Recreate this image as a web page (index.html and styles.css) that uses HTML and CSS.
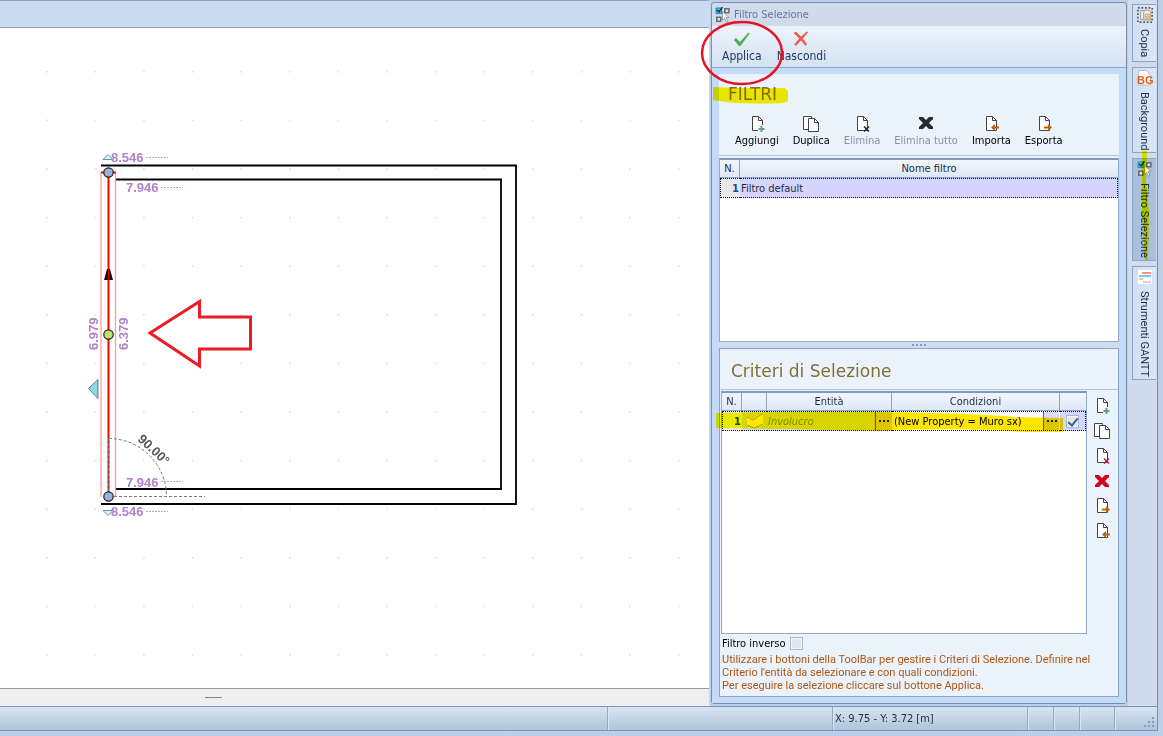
FILE: index.html
```html
<!DOCTYPE html>
<html lang="it">
<head>
<meta charset="utf-8">
<title>Filtro Selezione</title>
<link rel="stylesheet" href="styles.css">
</head>
<body>
<svg class="defs" aria-hidden="true">
  <symbol id="page" viewBox="0 0 16 16"><path d="M3.500 .5h6l4 4v10h-10z" fill="#fff" stroke="#444"/><path d="M9.500 .5v4h4" fill="none" stroke="#444"/><path d="M10 1l3.500 3.500" stroke="#7b2a80"/></symbol>
  <symbol id="add" viewBox="0 0 16 16"><use href="#page"/><path d="M9 9h7v7H9z" fill="#eef4fc"/><path d="M12.500 10v6M9.500 13h6" stroke="#5fa08c" stroke-width="2"/></symbol>
  <symbol id="copy" viewBox="0 0 18 16"><path d="M1.500 .5h8v13h-8z" fill="#fff" stroke="#444"/><path d="M6.500 2.500h6l4 4v9h-10z" fill="#fff" stroke="#444"/><path d="M12.500 2.500v4h4" fill="none" stroke="#444"/><path d="M13 3l3.500 3.500" stroke="#7b2a80"/></symbol>
  <symbol id="del" viewBox="0 0 16 16"><use href="#page"/><path d="M10 10.500l5 5M15 10.500l-5 5" stroke="currentColor" stroke-width="1.600"/></symbol>
  <symbol id="cross" viewBox="0 0 14 14"><path d="M0 1h4l3 3 3-3h4v2l-4 4 4 4v2h-4l-3-3-3 3H0v-2l4-4-4-4z" fill="currentColor"/></symbol>
  <symbol id="import" viewBox="0 0 16 16"><use href="#page"/><path d="M8 11.500l4-3.500v2.500h4v2h-4V15z" fill="#b8620c"/></symbol>
  <symbol id="export" viewBox="0 0 16 16"><use href="#page"/><path d="M16 11.500l-4-3.500v2.500H8v2h4V15z" fill="#b8620c"/></symbol>
  <symbol id="filter" viewBox="0 0 16 16"><path d="M1.800 1.800h4v4h-4zM9.800 1.800h4v4h-4zM1.800 10.200h4v4h-4z" fill="#dce4ee" stroke="#666c74" stroke-width="1.600"/><path d="M1 1h5.600v5.600H1z" fill="#4db9e8" stroke="#1a8fc4"/><path d="M2 3l2 2 3.500-5" fill="none" stroke="#10334d" stroke-width="1.400"/><path d="M7.500 4.500l6.500 6h-3l2 4-1.500 .8-2-4-2 2z" fill="#fff" stroke="#888" stroke-width=".8"/></symbol>
</svg>

<div class="app">
  <main class="work">
    <div class="ribbon"></div>
    <svg class="drawing" role="img" aria-label="Pianta">
      <defs>
        <pattern id="dots" x="46" y="43" width="48.600" height="48.600" patternUnits="userSpaceOnUse"><rect width="1.500" height="1.500" fill="#d8d8d8"/></pattern>
      </defs>
      <rect x="40" y="40" width="100%" height="590" fill="url(#dots)"/>
      <g fill="none" stroke="#000" stroke-width="2">
        <path d="M101 137.500H516V476H101" stroke-width="1.800"/>
        <path d="M116 151.500H501V461H116" stroke-width="1.800"/>
      </g>
      <path d="M101 144V469M115.500 144V469" stroke="#ff9d9d" stroke-width="1.300"/>
      <path d="M101 144.500H116M108.500 144V469" stroke="#f00" stroke-width="2"/>
      <path d="M104 252l3-11h3l3 11z" fill="#111"/><path d="M108.500 240v14" stroke="#e00"/>
      <path d="M109 468.500H205M109 410.500A58 58 0 0 1 166.500 468M108.500 410V468" fill="none" stroke="#777" stroke-dasharray="3 2"/>
      <g stroke="#222" stroke-width="1.200"><circle cx="108.500" cy="144.500" r="4.700" fill="#9bb0d6"/><circle cx="108.500" cy="468.500" r="4.700" fill="#9bb0d6"/><circle cx="108.500" cy="306.500" r="4.700" fill="#bde468"/></g>
      <path d="M103 131.500l5-5 5 5zM103 482.500l5 5 5-5z" fill="#cdf7f7" stroke="#578" stroke-width=".8"/>
      <path d="M88.500 360.500l9.500-9v19z" fill="#8adce4" stroke="#367" stroke-width=".8"/>
      <path d="M146 129.500h22M161 159.500h22M161 453.500h22M146 483.500h22" stroke="#c3a0d6" stroke-dasharray="2 1"/>
      <g class="dim">
        <text x="111" y="134">8.546</text><text x="126" y="164">7.946</text>
        <text x="126" y="459">7.946</text><text x="111" y="488">8.546</text>
        <text transform="translate(98 322) rotate(-90)">6.979</text><text transform="translate(128 322) rotate(-90)">6.379</text>
        <text class="angle" transform="translate(137 412) rotate(43)">90.00°</text>
      </g>
      <path d="M150 305L199.500 273.500V289H250.500V321H199.500V338z" fill="none" stroke="#ed1c24" stroke-width="3"/>
    </svg>
    <div class="grip-strip"><span class="grip"></span></div>
  </main>

  <section class="panel">
    <header class="titlebar"><svg class="i16"><use href="#filter"/></svg><h1>Filtro Selezione</h1></header>
    <div class="commands">
      <button class="cmd"><svg class="i16" viewBox="0 0 16 16"><path d="M0 9l2-2 4 4 8-9h2L6.500 15H5z" fill="#4cb04f"/></svg>Applica</button>
      <button class="cmd"><svg class="i16" viewBox="0 0 16 16"><path d="M1 2l2-1 5 5 5-4.500L15 1 9.500 7.500l4 5.500-1 1.500L8 9l-5 5.500-1.500-1L6.500 7.500z" fill="#ee5a50" stroke="#ee5a50" stroke-width=".7"/></svg>Nascondi</button>
      <svg class="ring" viewBox="0 0 84 66"><ellipse cx="42" cy="33" rx="40" ry="31" fill="none" stroke="#e81123" stroke-width="2.500"/></svg>
    </div>
    <div class="body">
      <section class="filters">
        <h2>FILTRI</h2>
        <svg class="marker-title" viewBox="0 0 76 20"><path d="M0 2Q38 4 72 3L75 6 75 16 70 18Q25 20 0 15z" fill="#fff200"/></svg>
        <div class="tools">
          <button><svg class="i16"><use href="#add"/></svg>Aggiungi</button>
          <button><svg class="i18"><use href="#copy"/></svg>Duplica</button>
          <button disabled><svg class="i16"><use href="#del"/></svg>Elimina</button>
          <button disabled><svg class="i14"><use href="#cross"/></svg>Elimina tutto</button>
          <button><svg class="i16"><use href="#import"/></svg>Importa</button>
          <button><svg class="i16"><use href="#export"/></svg>Esporta</button>
        </div>
        <div class="list">
          <table>
            <colgroup><col class="c-n"><col></colgroup>
            <thead><tr><th>N.</th><th>Nome filtro</th></tr></thead>
            <tbody><tr><td class="num">1</td><td>Filtro default</td></tr></tbody>
          </table>
        </div>
      </section>
      <div class="splitter"><i></i><i></i><i></i><i></i></div>
      <section class="criteria">
        <h2>Criteri di Selezione</h2>
        <div class="crit-main">
          <div class="list">
            <table>
              <colgroup><col class="c-n"><col class="c-icon"><col class="c-ent"><col><col class="c-check"></colgroup>
              <thead><tr><th>N.</th><th></th><th>Entità</th><th>Condizioni</th><th></th></tr></thead>
              <tbody><tr>
                <td class="num">1</td>
                <td><svg class="box" viewBox="0 0 18 16"><path d="M1 4l6 2 8-5 2 3v8l-9 3-7-3z" fill="#ffe98a"/><path d="M1 4l6 3 9-6M1 12l7 3 9-4" fill="none" stroke="#b39b5c"/></svg></td>
                <td><div class="pick"><em>Involucro</em><button aria-label="Scegli entità"><i></i><i></i><i></i></button></div></td>
                <td class="cond"><div class="pick"><span>(New Property = Muro sx)</span><button aria-label="Modifica condizioni"><i></i><i></i><i></i></button></div></td>
                <td class="mid"><input type="checkbox" class="check" checked aria-label="Attivo"></td>
              </tr></tbody>
            </table>
            <svg class="marker-row" viewBox="0 0 348 22" preserveAspectRatio="none"><path d="M0 2Q90 0 158 1V20Q80 18 0 17z" fill="#ff0"/><path d="M158 1Q260 2 300 6L348 7V21L308 21Q240 16 158 20z" fill="#ffe600"/></svg>
          </div>
          <div class="side">
            <button aria-label="Aggiungi"><svg class="i16"><use href="#add"/></svg></button>
            <button aria-label="Duplica"><svg class="i18"><use href="#copy"/></svg></button>
            <button aria-label="Elimina" class="dark-red"><svg class="i16"><use href="#del"/></svg></button>
            <button aria-label="Elimina tutto" class="red"><svg class="i14"><use href="#cross"/></svg></button>
            <button aria-label="Esporta"><svg class="i16"><use href="#export"/></svg></button>
            <button aria-label="Importa"><svg class="i16"><use href="#import"/></svg></button>
          </div>
        </div>
        <label class="inverse">Filtro inverso <input type="checkbox" class="check"></label>
        <p class="help">Utilizzare i bottoni della ToolBar per gestire i Criteri di Selezione. Definire nel Criterio l'entità da selezionare e con quali condizioni.<br>Per eseguire la selezione cliccare sul bottone Applica.</p>
      </section>
    </div>
  </section>

  <nav class="tabs">
    <button><svg class="i18" viewBox="0 0 18 18"><path d="M1 1h16v16H1z" fill="none" stroke="#222" stroke-width="1.300" stroke-dasharray="2 2"/><path d="M4 4h7v10H4z" fill="#eee" stroke="#999"/><path d="M7.500 14.500v-9l2-2h4l2 3v8z" fill="#f6efe6" stroke="#cf8848"/><path d="M9 8h5v5H9zM11.500 8v5M9 10.500h5" fill="none" stroke="#aaa"/></svg>Copia</button>
    <button><svg class="i18" viewBox="0 0 18 16"><path d="M2.500 15V.5h8l4 5V15z" fill="#fff" stroke="#bbb"/><text class="bg" x="1" y="14">BG</text></svg>Background</button>
    <button class="active"><svg class="i16"><use href="#filter"/></svg>Filtro Selezione<svg class="marker-tab" viewBox="0 0 8 110" preserveAspectRatio="none"><path d="M1 0h5L5 30 8 60 7 109H4L1 60z" fill="#ff0"/></svg></button>
    <button><svg class="i16" viewBox="0 0 16 16"><path d="M1 1h14v14H1z" fill="#fff"/><path d="M5 4h9" stroke="#ff9080" stroke-width="2"/><path d="M2 7h12" stroke="#7cc7f2" stroke-width="2"/><path d="M2 10h4" stroke="#bce67a" stroke-width="2"/><path d="M6 13h8" stroke="#e6c8e0" stroke-width="2"/></svg>Strumenti GANTT</button>
  </nav>

  <footer class="status">
    <span class="s-fill"></span><span class="s-msg"></span><span class="s-pos">X: 9.75 - Y: 3.72 [m]</span><span class="s-a"></span><span class="s-a"></span><span class="s-b"></span>
    <span class="s-end"><svg class="i14" viewBox="0 0 14 14"><path d="M9 1h2v2H9zM5 5h2v2H5zM9 5h2v2H9zM1 9h2v2H1zM5 9h2v2H5zM9 9h2v2H9z" fill="#829fc4"/></svg></span>
  </footer>
</div>
</body>
</html>
```
FILE: styles.css
```css
* { box-sizing: border-box; }
body {
  margin: 0;
  font: 11px/13px "DejaVu Sans Condensed", "DejaVu Sans", sans-serif;
  color: #1e2a44;
  background: #bdcfe8;
}
.defs { position: absolute; width: 0; height: 0; }
h1, h2, p { margin: 0; font-weight: normal; }
button { margin: 0; padding: 0; border: 0; background: none; font: inherit; color: inherit; }
svg { display: block; flex: none; }
.i14 { width: 14px; height: 14px; }
.i16 { width: 16px; height: 16px; }
.i18 { width: 18px; height: 16px; }

.app {
  display: grid;
  grid-template-columns: 1fr 418px 30px;
  grid-template-rows: 1fr 25px;
  height: 100vh;
  padding: 0 5px 5px 0;
}
.work { display: flex; flex-direction: column; min-width: 0; background: #d0dcec; padding-right: 1px; }
.ribbon { height: 28px; background: #cbdcf2; border-top: 1px solid #8ba4c4; border-bottom: 1px solid #8ba4c4; }
.drawing { flex: 1; width: 100%; min-height: 0; background: #fff; }
.grip-strip { height: 18px; background: #efefef; border-top: 1px solid #999; display: flex; align-items: center; padding-left: 205px; }
.grip { width: 17px; height: 1px; background: #888; }
.dim { font: bold 13px "Liberation Sans", sans-serif; fill: #b283c6; }
.dim .angle { fill: #555; }

.panel {
  display: flex;
  flex-direction: column;
  min-height: 0;
  margin: 2px 1px 2px 1px;
  border: 1px solid #7a8fae;
  border-radius: 3px;
  background: #d0dcec;
}
.titlebar { display: flex; align-items: center; gap: 3px; height: 23px; padding: 0 3px; color: #6577a0; }
.titlebar h1 { font-size: 11px; }
.commands {
  position: relative;
  display: flex;
  gap: 15px;
  height: 42px;
  padding: 5px 10px;
  background: linear-gradient(#ecf3fc, #d5e2f1);
  border-bottom: 1px solid #8ba6cc;
}
.cmd { display: flex; flex-direction: column; align-items: center; gap: 3px; font-size: 12px; color: #1f3763; }
.ring { position: absolute; left: -12px; top: -6px; width: 84px; height: 66px; z-index: 2; }
.body { flex: 1; display: flex; flex-direction: column; min-height: 0; padding: 6px 7px 6px; background: #c3daf9; }
.filters { position: relative; flex: 268 1 0; display: flex; flex-direction: column; min-height: 0; background: #eaf2fc; }
h2 { font: 17px/20px "DejaVu Sans", sans-serif; color: #82702f; }
.filters h2 { padding: 10px 9px 0; }
.marker-title { position: absolute; left: -6px; top: 11px; width: 76px; height: 20px; mix-blend-mode: multiply; }
.tools { display: flex; gap: 14px; padding: 12px 16px 8px; border-bottom: 1px solid #b3c2d8; margin-bottom: 2px; color: #000; }
.tools button { display: flex; flex-direction: column; align-items: center; justify-content: space-between; height: 31px; }
.tools button:disabled { color: #8c919c; }
.tools button:disabled svg { color: #2b2b2b; }

.list { position: relative; flex: 1; min-width: 0; min-height: 0; background: #fff; border: 1px solid #93a9c9; border-top: 2px solid #8299bb; }
table { width: 100%; table-layout: fixed; border-collapse: separate; border-spacing: 0; }
th { height: 18px; padding: 0; font-weight: normal; text-align: center; background: linear-gradient(#f1f6fd, #dde9f7); border-right: 1px solid #8ba4c8; border-bottom: 1px solid #8ba4c8; }
th:last-child { border-right: 0; }
td { height: 20px; padding: 0 1px; background: #d6d5ff; border: dotted #111; border-width: 1px 0; }
td:first-child { border-left-width: 1px; }
td:last-child { border-right-width: 1px; }
.num { text-align: right; font-weight: bold; color: #0b4fa0; background: #e9e9e9; }
.c-n { width: 20px; }
.c-icon { width: 25px; }
.c-ent { width: 125px; }
.c-check { width: 26px; }
.splitter { display: flex; gap: 2px; justify-content: center; align-items: center; height: 6px; background: #d0dcec; }
.splitter i { width: 2px; height: 2px; background: #8aa0c4; }
.criteria { flex: 343 1 0; display: flex; flex-direction: column; min-height: 0; padding: 0 0 4px 1px; background: #eaf2fc; border: 1px solid #8ba4c8; }
.criteria h2 { padding: 12px 10px 8px; border-bottom: 1px solid #b3c2d8; }
.crit-main { flex: 1; display: flex; min-height: 0; padding-top: 1px; }
.pick { display: flex; align-items: center; justify-content: space-between; height: 18px; }
.pick em { color: #8b8ba8; }
.pick button { display: flex; gap: 2px; align-items: center; justify-content: center; width: 16px; height: 18px; border-left: 1px solid #667; background: #dcdcf6; }
.pick i { width: 2px; height: 2px; background: #223; }
.cond { background: #fff; color: #000; padding-left: 2px; }
.box { width: 18px; height: 16px; margin-left: 3px; }
.mid { text-align: center; }
.check { appearance: none; display: inline-grid; place-items: center; width: 13px; height: 13px; margin: 0; vertical-align: middle; border: 1px solid #a9b8d0; background: #e4e6ea; box-shadow: inset 0 0 0 1px #f7f7f9; }
.mid .check { vertical-align: top; }
.check:checked::after { content: ""; width: 4px; height: 8px; border: solid #3f5e92; border-width: 0 2px 2px 0; transform: rotate(40deg); }
.marker-row { position: absolute; left: -6px; top: 18px; width: calc(100% - 17px); height: 22px; mix-blend-mode: multiply; pointer-events: none; }
.side { display: flex; flex-direction: column; align-items: center; gap: 9px; width: 31px; padding: 7px 2px 0 0; }
.side button { display: grid; place-items: center; height: 16px; }
.dark-red { color: #a52b4a; }
.red { color: #d0021b; }
.inverse { display: flex; align-items: center; gap: 4px; height: 19px; padding-left: 1px; color: #000; }
.help { font: 11px/13px Roboto, sans-serif; color: #b0570f; padding: 0 20px 0 1px; }

.tabs { display: flex; flex-direction: column; gap: 5px; padding: 4px 2px 0 4px; background: #d0dcec; border-right: 1px solid #6f8db5; }
.tabs button {
  position: relative;
  display: flex;
  align-items: center;
  gap: 6px;
  writing-mode: vertical-rl;
  font-family: Roboto, sans-serif;
  width: 24px;
  min-height: 58px;
  padding: 2px 0;
  background: linear-gradient(90deg, #cfe0f5, #dbe7f5);
  border: 1px solid #8ba4c8;
  border-right: 0;
}
.tabs .active { background: #a9c0dd; }
.tabs svg { writing-mode: horizontal-tb; }
.bg { font: bold 11px/11px "Liberation Sans", sans-serif; fill: #e0601a; }
.marker-tab { position: absolute; left: 8px; top: -8px; width: 8px; height: 110px; mix-blend-mode: multiply; }

.status { grid-column: 1 / -1; display: flex; align-items: stretch; font-size: 11px; line-height: 24px; background: linear-gradient(#d9e4f4, #b0c3d7); border: solid #7595c0; border-width: 1px 1px 1px 0; }
.status span { border-right: 1px solid #94a9c3; box-shadow: 1px 0 0 #dce6f2; }
.s-fill { flex: 1; }
.s-msg { width: 225px; }
.s-pos { width: 195px; padding-left: 2px; }
.s-a { width: 26px; }
.s-b { width: 35px; }
.status .s-end { display: flex; justify-content: flex-end; align-items: flex-end; width: 42px; border: 0; box-shadow: none; }
```
